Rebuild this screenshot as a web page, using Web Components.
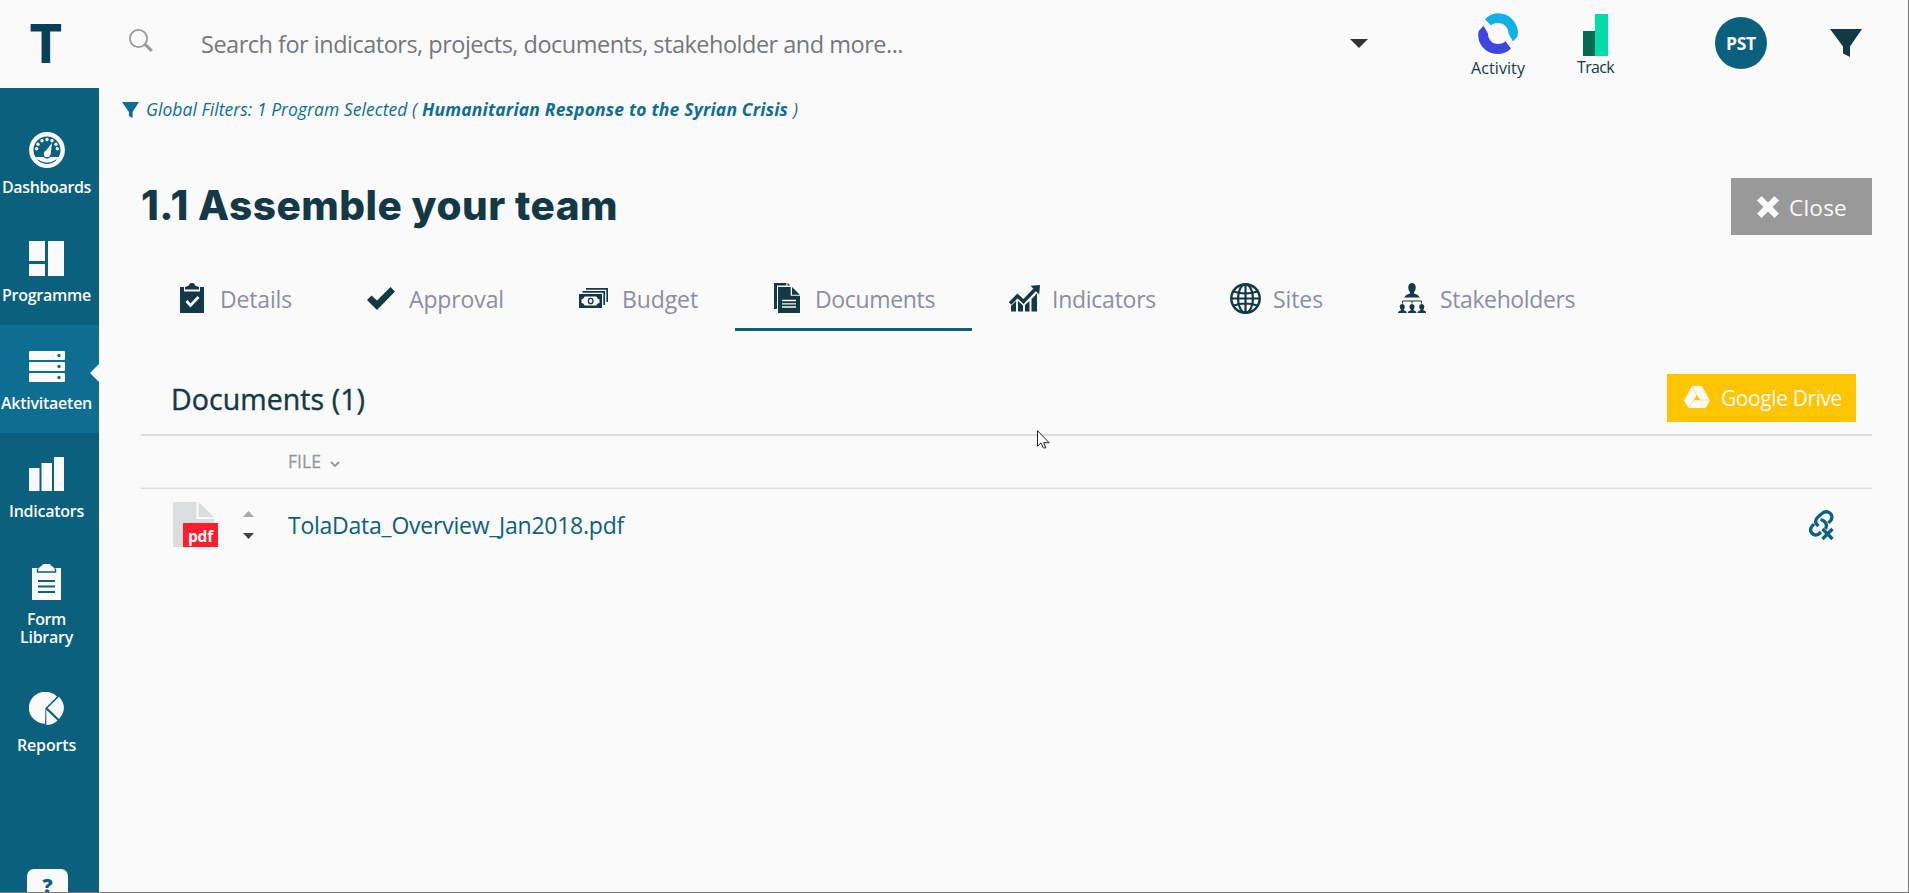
<!DOCTYPE html>
<html lang="en">
<head>
<meta charset="utf-8">
<title>TolaData</title>
<style>
html,body{margin:0;height:100%;overflow:hidden}
body{font-family:"Open Sans","Noto Sans",sans-serif;background:#fafafa;color:#133947}
</style>
</head>
<body>
<tola-app></tola-app>
<script>
const define=(name,html,setup)=>customElements.define(name,class extends HTMLElement{
  connectedCallback(){
    if(this.shadowRoot)return;
    const t=document.createElement('template');
    t.innerHTML=typeof html==='function'?html(this):html;
    this.attachShadow({mode:'open'}).append(t.content.cloneNode(true));
    if(setup)setup(this);
  }
});

/* One line of text tracked to fill the width given in "w". */
define('fit-text',`<style>:host{display:block;white-space:nowrap;line-height:1;flex:none}span{display:inline-block}</style><span><slot></slot></span>`,el=>{
  const w=+el.getAttribute('w'),s=el.shadowRoot.querySelector('span');
  el.style.width=w+'px';
  const n=[...el.textContent].length;
  s.style.letterSpacing=((w-s.getBoundingClientRect().width)/n).toFixed(3)+'px';
});

const ICONS={
search:['0 0 24 23','<circle cx="9.5" cy="9.5" r="8.6" fill="none" stroke="#999" stroke-width="1.8"/><path d="M15.8 15.2l7 6.6" stroke="#999" stroke-width="3"/>'],
caret:['0 0 18 9','<path d="M0 0h18l-9 9z"/>'],
funnel:['0 0 32 28','<path d="M0 0h32L20 17.5V28l-7-3.5v-7z"/>'],
activity:['0 0 40 41','<path d="M7 6.2C14-1.5 27-1.8 34.500 6.500 39 11.500 41 17.500 39.400 23.500L35 28.500 30.500 20.500C30.500 14.500 26 10 20 10c-3 0-5 .7-7 2.400z" fill="#12b0e8"/><path d="M5.500 12.800L10 20.500C10 26.500 14 31 20 31c3 0 5.500-.8 7.500-2.700L33 35.400C25 43.500 11.500 42.500 4.500 34 .8 29.500-.5 24 .6 18.300z" fill="#3d47e0"/>'],
track:['0 0 25 42','<path d="M0 17h12v25H0z" fill="#056a54"/><path d="M12 0h13v42H12z" fill="#04dca8"/>'],
gauge:['0 0 36 36','<circle cx="18" cy="18" r="15.700" fill="none" stroke="#fafafa" stroke-width="4.400"/><path d="M6.500 25h8.500c1 2.300 5 2.300 6 0h8.500c-5 7.500-18 7.500-23 0z"/><circle cx="18" cy="22" r="3.200"/><path d="M15.500 20.500L23 11l-1.500 12z"/><circle cx="7.700" cy="16.800" r="1.700"/><circle cx="9" cy="12.300" r="1.700"/><circle cx="13" cy="8.800" r="1.700"/><circle cx="18" cy="7.500" r="1.700"/><circle cx="23" cy="8.800" r="1.700"/><circle cx="27" cy="12.300" r="1.700"/><circle cx="28.300" cy="16.800" r="1.700"/><path d="M9 28c5 4.500 13 4.500 18 0" fill="none" stroke="#0b607d" stroke-width="1"/>'],
grid:['0 0 35 35','<path d="M0 0h16v20H0zM0 23h16v12H0zM19 0h16v35H19z"/>'],
servers:['0 0 36 31','<rect width="36" height="9" rx="1"/><rect y="11" width="36" height="9" rx="1"/><rect y="22" width="36" height="9" rx="1"/><g fill="#0d6e91"><circle cx="30" cy="4.500" r="1.700"/><circle cx="30" cy="15.500" r="1.700"/><circle cx="30" cy="26.500" r="1.700"/></g>'],
bars:['0 0 35 34','<path d="M0 11h10.500v23H0zM12.500 6H23v28H12.500zM25 0h10v34H25z"/>'],
form:['0 0 29 36','<path d="M0 4h29v32H0z"/><path d="M5.500 8V5.500L10 2.500h9L23.500 5.500V8z" stroke="#0b607d" stroke-width="1.500"/><rect x="10" width="9" height="5" rx="2"/><path d="M6.500 7V4.500L9 2h11l2.500 2.500V7z"/><path d="M6 17h17M6 22.500h17M6 28h17" stroke="#0b607d" stroke-width="2"/>'],
pie:['0 0 35 33','<path d="M16.500 16L28 4.500A16.500 16 0 1 0 16 31.800z"/><path d="M18.700 16L30 4.800c6.500 7 6.500 15 0 22.200z"/><path d="M17.300 17.700L28.500 28.500c-3 3.300-7 4.500-11.200 4.500z"/>'],
details:['0 0 24 30','<path d="M0 4h4v4.500h16V4h4v26H0z"/><path d="M5 6.500V4l4-1.500C9-.8 15-.8 15 2.500L19 4v2.500z"/><path d="M6.500 18l4 4.500 8-8.500" fill="none" stroke="#fafafa" stroke-width="2.700"/>'],
check:['0 0 28 23','<path d="M0 13l4.500-4.500 5.500 5L23.500 0 28 4.500 10 23z"/>'],
budget:['0 0 29 20','<path d="M0 6h23v14H0z"/><path d="M3.500 3.800h21.700V17M7 .8h21.200V14" fill="none" stroke="#133947" stroke-width="1.700"/><path d="M5.500 8.500h12c.3 1.500 1.300 2.500 3 2.800v3.700c-1.700.3-2.700 1.200-3 2.500h-12C5.200 16.200 4.200 15.300 2.500 15v-3.700c1.700-.3 2.700-1.300 3-2.800z" fill="#fafafa"/><ellipse cx="11.700" cy="13" rx="2.300" ry="2.700" fill="none" stroke="#133947" stroke-width="1.300"/>'],
docs:['0 0 26 30','<path d="M0 0h12.300v2.500H3V26H0zM13.500 0l3 2.500h-3zM4 4h12.700v8.700H26V30H4zM18 4l7.800 7.700H18z"/><path d="M8 17.500h14M8 20.800h14M8 24h14" stroke="#fafafa" stroke-width="1.300"/>'],
growth:['0 0 31 27','<path d="M1 18.500L8.500 11l6 5.500L26 4.500" fill="none" stroke="#133947" stroke-width="3.500"/><path d="M21.500.8L31 0l-.8 9.500z"/><path d="M2 21l5-5v10.500H2zM9 16l5 4.500v6H9zM16 20l4.500-4v10.500H16zM22.500 14l5.500-5.500v18h-5.500z"/>'],
globe:['0 0 31 31','<g fill="none" stroke="#133947" stroke-width="2.200"><circle cx="15.500" cy="15.500" r="14.200" stroke-width="2.500"/><ellipse cx="15.500" cy="15.500" rx="7.500" ry="14.200"/><path d="M15.500 1v29M1 15.500h29M3.500 8.500q12 4 24 0M3.500 22.500q12-4 24 0"/></g>'],
people:['0 0 28 30','<g><path d="M10.300 4c0-5.300 7.400-5.300 7.400 0 0 2.500-.7 4.200-1.700 5.200v1.300c3 .8 5 2 5.700 4H6.300c.7-2 2.700-3.200 5.700-4V9.200c-1-1-1.700-2.700-1.700-5.200z"/></g><path d="M4.500 20.500V18h19v2.500M14 18v2.500" fill="none" stroke="#133947"/><g><path id="q" d="M1.700 23.500c0-3.400 5.100-3.400 5.100 0 0 1.500-.5 2.500-1 3v.8c1.800.4 2.800 1.200 3 2.700H0c.2-1.500 1.200-2.300 3-2.700v-.8c-.5-.5-1.300-1.500-1.300-3z"/><use href="#q" x="9.750"/><use href="#q" x="19.500"/></g>'],
cross:['0 0 22 22','<path d="M4.500 0L11 6.500 17.500 0 22 4.500 15.500 11 22 17.500 17.500 22 11 15.500 4.500 22 0 17.500 6.500 11 0 4.500z"/>'],
drive:['0 0 26 22','<path d="M8 0h9.500L26 14.500 21.500 22h-17L0 14.500z"/><path d="M12.800 8.500L16 14H10z" fill="#ffc500"/><path d="M4.500 22L10 14h15.500M12.500 8.500L8 .3" fill="none" stroke="#ffc500" stroke-width=".5"/>'],
chevron:['0 0 10 6','<path d="M1 1l4 4 4-4" fill="none" stroke="#999" stroke-width="2"/>'],
unlink:['0 0 25 30','<g fill="none" stroke="#0b607d" stroke-width="3.300"><path d="M9.500 16C5.500 13 6 9.500 9 7l4-3.500C18.500-1 25.500 4.500 22 10l-2.500 3"/><path d="M11.500 9.500c5.500 1.500 7 5.500 5 9.500M5 14l-1.800 2C-1 21 4 26.500 9 24.500l3-2.500"/><path d="M13.500 19l10 10M23.500 19l-10 10"/></g>'],
pdf:['0 0 41 45','<path d="M0 0h23.500v17H41v28H0z" fill="#dcdddf"/><path d="M25.500 0L41 15H25.500z" fill="#dcdddf"/>'],
cursor:['0 0 13 19','<path d="M.5.700v15.500l3.500-3.300 2.300 5h2.500l-2.100-5.200h5.500z" fill="#fff" stroke="#222" stroke-width="1"/>']
};
define('t-icon',el=>{
  const [vb,body]=ICONS[el.getAttribute('name')],[,,w,h]=vb.split(' ');
  return `<style>:host{display:block;flex:none;width:${el.getAttribute('w')||w}px;height:${el.getAttribute('h')||h}px}svg{display:block;width:100%;height:100%;fill:currentColor}</style><svg viewBox="${vb}" preserveAspectRatio="none">${body}</svg>`;
});

define('nav-item',el=>`<style>
:host{display:flex;flex:none;flex-direction:column;align-items:center;box-sizing:border-box;width:99px;height:${el.getAttribute('h')||108}px;padding:23px 6px 0 0;color:#fafafa;position:relative}
:host([active]){background:#0d6e91}
:host([active])::after{content:"";position:absolute;right:0;top:39px;border:9px solid transparent;border-left:0;border-right-color:#fafafa}
.i{height:36px;display:flex;align-items:center}
.l{display:flex;flex-direction:column;align-items:center;gap:2px;padding-top:11px;font-weight:600;font-size:16px}
</style><div class="i"><t-icon name="${el.getAttribute('icon')}"></t-icon></div><div class="l"><slot></slot></div>`);

define('side-nav',`<style>
:host{display:flex;flex-direction:column;width:99px;flex:none;background:#0b607d;height:804px;overflow:hidden;box-sizing:border-box;padding-top:21px}
.help{margin:94px 0 0 27px;width:41px;height:40px;flex:none;border-radius:7px;background:#fafafa;color:#0b607d;font:800 20px/34px "Open Sans",sans-serif;text-align:center}
</style>
<nav-item icon="gauge"><fit-text w="89">Dashboards</fit-text></nav-item>
<nav-item icon="grid"><fit-text w="89">Programme</fit-text></nav-item>
<nav-item icon="servers" active><fit-text w="91">Aktivitaeten</fit-text></nav-item>
<nav-item icon="bars"><fit-text w="75">Indicators</fit-text></nav-item>
<nav-item icon="form" h="126"><fit-text w="39">Form</fit-text><fit-text w="53">Library</fit-text></nav-item>
<nav-item icon="pie"><fit-text w="59">Reports</fit-text></nav-item>
<div class="help">?</div>`);

define('app-link',el=>`<style>:host{display:flex;flex-direction:column;align-items:center;font-size:16px;color:#133947}
::slotted(*){margin-top:${el.getAttribute('gap')}px}</style><t-icon name="${el.getAttribute('icon')}"></t-icon><slot></slot>`);

define('top-bar',`<style>
:host{display:flex;height:88px;flex:none;align-items:center}
.logo{width:99px;padding-right:7px;box-sizing:border-box;text-align:center;font:800 53px/87px Inter,sans-serif;color:#054257;flex:none}
.logo span{display:inline-block;transform:scaleX(.94)}
.search{margin:-8px 48px 0 30px}
.q{font-size:23.500px;color:#74777b;margin-top:2px}
.caret{color:#333;margin:-1px 0 0 447px}
app-link{align-self:flex-start}
.pst{margin-left:101px;width:52px;height:52px;border-radius:50%;background:#0b607d;color:#fafafa;display:flex;align-items:center;justify-content:center;font-size:17.500px;font-weight:700;margin-top:-2px}
.pst fit-text{margin-top:2px}
.f{margin:-2px 0 0 63px;color:#133947}
</style>
<div class="logo"><span>T</span></div>
<t-icon class="search" name="search"></t-icon>
<fit-text class="q" w="702">Search for indicators, projects, documents, stakeholder and more...</fit-text>
<t-icon class="caret" name="caret"></t-icon>
<app-link icon="activity" gap="6" style="margin:13px 0 0 103px"><fit-text w="54">Activity</fit-text></app-link>
<app-link icon="track" gap="3" style="margin:14px 0 0 52px"><fit-text w="37">Track</fit-text></app-link>
<div class="pst"><fit-text w="30">PST</fit-text></div>
<t-icon class="f" name="funnel"></t-icon>`);

define('filter-note',`<style>
:host{display:flex;align-items:center;height:44px;padding-left:23px;font-size:17.500px;font-style:italic;color:#0d6e91}
t-icon{margin:-1px 7px 0 0}.b{font-weight:700;margin:0 5px 0 5px}
</style>
<t-icon name="funnel" w="17" h="16"></t-icon><fit-text w="271">Global Filters: 1 Program Selected (</fit-text><fit-text class="b" w="366">Humanitarian Response to the Syrian Crisis</fit-text><fit-text w="7">)</fit-text>`);

define('tab-item',el=>`<style>
:host{display:flex;align-items:center;box-sizing:border-box;height:66px;border-bottom:3px solid transparent;font-size:23px;color:#8d8e9f;flex:none}
:host([active]){border-color:#0b607d}
t-icon{color:#133947;margin-top:3px}::slotted(*){margin-top:5px}
</style><t-icon name="${el.getAttribute('icon')}"></t-icon><slot></slot>`);

define('tab-bar',`<style>:host{display:flex}</style>
<tab-item icon="details" style="width:188px;padding-left:39px"><fit-text style="margin-left:16px" w="72">Details</fit-text></tab-item>
<tab-item icon="check" style="width:212px;padding-left:38px"><fit-text style="margin-left:14px" w="95">Approval</fit-text></tab-item>
<tab-item icon="budget" style="width:194px;padding-left:38px"><fit-text style="margin-left:14px" w="76">Budget</fit-text></tab-item>
<tab-item icon="docs" active style="width:237px;padding-left:39px"><fit-text style="margin-left:15px" w="120">Documents</fit-text></tab-item>
<tab-item icon="growth" style="width:220px;padding-left:37px"><fit-text style="margin-left:12px" w="104">Indicators</fit-text></tab-item>
<tab-item icon="globe" style="width:168px;padding-left:38px"><fit-text style="margin-left:12px" w="50">Sites</fit-text></tab-item>
<tab-item icon="people" style="width:220px;padding-left:38px"><fit-text style="margin-left:14px" w="135">Stakeholders</fit-text></tab-item>`);

define('flat-button',`<style>:host{display:flex;align-items:center;box-sizing:border-box;color:#fafafa;flex:none}</style><slot></slot>`);

define('page-heading',`<style>
:host{display:flex;justify-content:space-between;align-items:center;height:57px}
h1{margin:0;font:800 40.500px/57px Inter,sans-serif;color:#133947}
flat-button{width:141px;height:57px;background:#999;padding-left:26px;font-size:22.500px}
h1 fit-text{line-height:51px}
</style>
<h1><fit-text w="477" style="margin-bottom:3px">1.1 Assemble your team</fit-text></h1>
<flat-button><t-icon name="cross"></t-icon><fit-text style="margin:4px 0 0 10px" w="58">Close</fit-text></flat-button>`);

define('document-list',`<style>
:host{display:block;padding-top:43px;position:relative}
.bar{display:flex;align-items:center;justify-content:space-between;height:48px;padding:0 16px 12px 30px;border-bottom:2px solid #ddd}
.bar h2{margin:0;font-weight:500;font-size:28.500px;color:#133947;-webkit-text-stroke:.4px #133947}
flat-button{width:189px;height:48px;background:#ffc500;padding-left:17px;font-size:21px}
.head{display:flex;align-items:center;height:52px;border-bottom:1px solid #ddd;box-shadow:inset 0 -1px #efefef;padding-left:147px;color:#999;font-size:17.500px;font-weight:500;-webkit-text-stroke:.3px #999}
.head t-icon{margin-left:9px}
.row{display:flex;align-items:center;height:72px;padding:0 38px 0 32px;color:#0b607d}
.pdf{position:relative;width:45px;height:45px;margin-top:-1px}
.tag{position:absolute;left:10px;bottom:0;width:35px;height:24px;background:#ff1d2d;color:#fafafa;font-weight:700;font-size:15.500px;display:flex;justify-content:center}
.tag fit-text{line-height:27px}
.sort{margin:-1px 0 0 25px;display:flex;flex-direction:column;gap:16px;width:11px}
.name{margin:1px auto 0 34px;font-size:23px}
.cur{position:absolute;left:896px;top:99px}
</style>
<div class="bar"><h2><fit-text style="margin-top:3px" w="194">Documents (1)</fit-text></h2>
<flat-button><t-icon name="drive" style="margin-bottom:2px"></t-icon><fit-text style="margin:1px 0 0 11px" w="121">Google Drive</fit-text></flat-button></div>
<div class="head"><fit-text w="33">FILE</fit-text><t-icon name="chevron" style="margin-top:3px"></t-icon></div>
<div class="row"><div class="pdf"><t-icon name="pdf"></t-icon><div class="tag"><fit-text w="25">pdf</fit-text></div></div>
<div class="sort"><t-icon name="caret" w="11" h="6" style="color:#aaa;transform:scaleY(-1)"></t-icon><t-icon name="caret" w="11" h="6" style="color:#444"></t-icon></div>
<fit-text class="name" w="336">TolaData_Overview_Jan2018.pdf</fit-text>
<t-icon name="unlink"></t-icon></div>
<t-icon class="cur" name="cursor"></t-icon>`);

define('tola-app',`<style>
:host{display:flex;flex-direction:column;box-sizing:border-box;width:1909px;height:893px;border:solid #777;border-width:0 1px 1px 0;background:#fafafa;overflow:hidden}
.body{display:flex;flex:1;min-height:0}
main{flex:1;min-width:0}
page-heading,tab-bar,document-list{margin:0 36px 0 42px}
page-heading{margin-top:46px}
tab-bar{margin-top:30px}
</style>
<top-bar></top-bar>
<div class="body"><side-nav></side-nav><main><filter-note></filter-note><page-heading></page-heading><tab-bar></tab-bar><document-list></document-list></main></div>`);
</script>
</body>
</html>
